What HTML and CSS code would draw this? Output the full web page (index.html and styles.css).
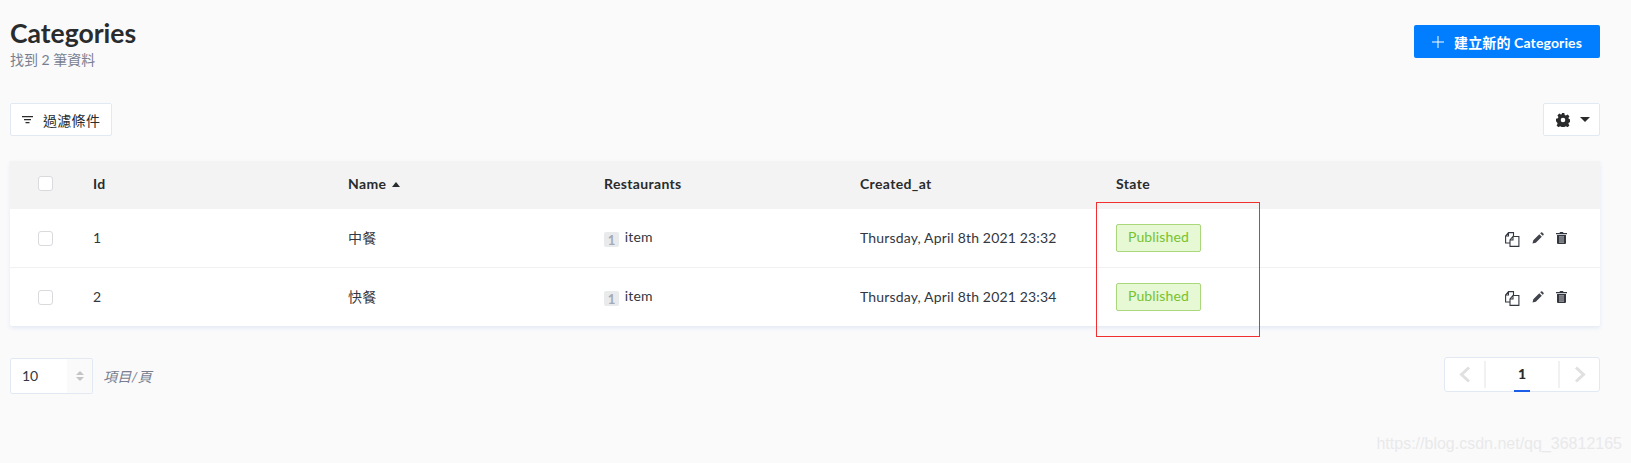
FILE: index.html
```html
<!DOCTYPE html>
<html lang="zh-Hant">
<head>
  <meta charset="UTF-8" />
  <title>Categories</title>
  <link rel="stylesheet" href="styles.css">
</head>
<body>
  <div id="page">
    <div class="head">
      <div>
        <h1>Categories</h1>
        <p class="count">找到 2 筆資料</p>
      </div>
      <button class="btn-add">
        <svg width="12" height="12" viewBox="0 0 12 12"><path d="M6 0v12M0 6h12" stroke="#fff" stroke-width="1" fill="none"/></svg>
        <span>建立新的 Categories</span>
      </button>
    </div>

    <div class="tools">
      <button class="btn-filter">
        <svg width="11" height="8" viewBox="0 0 11 8"><path d="M0 .6h11M2 3.600h7M3.500 6.600h4" stroke="#292b2c" stroke-width="1.200" fill="none"/></svg>
        <span>過濾條件</span>
      </button>
      <button class="btn-gear">
        <svg width="14" height="14" viewBox="0 0 14 14"><path fill-rule="evenodd" fill="#292b2c" d="M5.700 0h2.600l.4 1.900 1.200.5 1.700-1 1.800 1.800-1 1.700.5 1.200 1.900.4v2.600l-1.900.4-.5 1.200 1 1.700-1.800 1.800-1.700-1-1.200.5-.4 1.900H5.700l-.4-1.900-1.200-.5-1.700 1-1.800-1.800 1-1.700-.5-1.200L0 8.300V5.700l1.900-.4.5-1.200-1-1.700 1.800-1.800 1.700 1 1.200-.5zM7 4.700a2.300 2.300 0 1 0 0 4.600 2.300 2.300 0 0 0 0-4.600z"/></svg>
        <i class="caret"></i>
      </button>
    </div>

    <div class="list">
      <div class="row row-head">
        <div class="cell-check"><span class="check"></span></div>
        <div class="cell cell-id">Id</div>
        <div class="cell">Name <i class="sort"></i></div>
        <div class="cell">Restaurants</div>
        <div class="cell">Created_at</div>
        <div class="cell">State</div>
      </div>
      <div class="row">
        <div class="cell-check"><span class="check"></span></div>
        <div class="cell cell-id">1</div>
        <div class="cell">中餐</div>
        <div class="cell"><span class="num">1</span> item</div>
        <div class="cell">Thursday, April 8th 2021 23:32</div>
        <div class="cell cell-state"><span class="tag">Published</span></div>
        <div class="actions">
          <svg width="15" height="15" viewBox="0 0 15 15"><path d="M3.500 .6H8.500V11H.6V4L3.500 .6V4H.6" stroke="#333740" stroke-width="1.100" fill="#fff"/><path d="M8 4.500H13.900V14.400H5V8L8 4.500V8H5" stroke="#333740" stroke-width="1.100" fill="#fff"/></svg>
          <svg width="12" height="12" viewBox="0 0 12 12"><path d="M.5 11.500l.8-3.300 6-6 2.500 2.500-6 6zM8.200 1.300l.8-.8a1 1 0 0 1 1.300 0l1.200 1.200a1 1 0 0 1 0 1.300l-.8.800z" fill="#41444c"/></svg>
          <svg width="11" height="12" viewBox="0 0 11 12"><path fill-rule="evenodd" d="M4 0h3l.5 1H11v1.200H0V1h3.500zM1 3h9v8a1 1 0 0 1-1 1H2a1 1 0 0 1-1-1zm2 1.500v6h5v-6z" fill="#333740"/><rect x="3" y="4.500" width="5" height="6" fill="#77797f"/></svg>
        </div>
      </div>
      <div class="row">
        <div class="cell-check"><span class="check"></span></div>
        <div class="cell cell-id">2</div>
        <div class="cell">快餐</div>
        <div class="cell"><span class="num">1</span> item</div>
        <div class="cell">Thursday, April 8th 2021 23:34</div>
        <div class="cell cell-state"><span class="tag">Published</span></div>
        <div class="actions">
          <svg width="15" height="15" viewBox="0 0 15 15"><path d="M3.500 .6H8.500V11H.6V4L3.500 .6V4H.6" stroke="#333740" stroke-width="1.100" fill="#fff"/><path d="M8 4.500H13.900V14.400H5V8L8 4.500V8H5" stroke="#333740" stroke-width="1.100" fill="#fff"/></svg>
          <svg width="12" height="12" viewBox="0 0 12 12"><path d="M.5 11.500l.8-3.300 6-6 2.500 2.500-6 6zM8.200 1.300l.8-.8a1 1 0 0 1 1.300 0l1.200 1.200a1 1 0 0 1 0 1.300l-.8.800z" fill="#41444c"/></svg>
          <svg width="11" height="12" viewBox="0 0 11 12"><path fill-rule="evenodd" d="M4 0h3l.5 1H11v1.200H0V1h3.500zM1 3h9v8a1 1 0 0 1-1 1H2a1 1 0 0 1-1-1zm2 1.500v6h5v-6z" fill="#333740"/><rect x="3" y="4.500" width="5" height="6" fill="#77797f"/></svg>
        </div>
      </div>
    </div>

    <div class="foot">
      <div class="per-page">
        <div class="select">
          <span class="select-val">10</span>
          <span class="select-arrows"><i class="up"></i><i class="down"></i></span>
        </div>
        <em>項目/頁</em>
      </div>
      <div class="pager">
        <span class="pager-arrow"><svg width="12" height="17" viewBox="0 0 12 17"><path d="M10 1.500L2.500 8.500l7.500 7" stroke="#e0e0e0" stroke-width="3" fill="none"/></svg></span>
        <span class="pager-num">1</span>
        <span class="pager-arrow"><svg width="12" height="17" viewBox="0 0 12 17"><path d="M2 1.500l7.500 7-7.500 7" stroke="#e0e0e0" stroke-width="3" fill="none"/></svg></span>
      </div>
    </div>
  </div>

  <div class="red-box"></div>
  <div class="watermark">https://blog.csdn.net/qq_36812165</div>
</body>
</html>
```

FILE: styles.css
```css
body {
  margin: 0;
  height: 463px;
  background: #fafafb;
  font-family: Lato, "Noto Sans CJK TC", sans-serif;
  font-size: 14px;
  color: #333740;
  overflow: hidden;
  position: relative;
}
#page {
  padding: 18px 31px 0 10px;
}
button {
  font-family: inherit;
  cursor: pointer;
}
.head {
  display: flex;
  justify-content: space-between;
  align-items: flex-start;
  height: 85px;
}
h1 {
  margin: 0;
  font-size: 26.5px;
  line-height: 30px;
  font-weight: 700;
  color: #292b2c;
}
.count {
  margin: 4px 0 0;
  font-size: 14px;
  line-height: 16px;
  color: #787e8f;
}
.btn-add {
  display: flex;
  align-items: center;
  gap: 10px;
  height: 33px;
  margin-top: 7px;
  padding: 0 18px;
  background: #007eff;
  border: 0;
  border-radius: 2px;
  color: #fff;
  font-size: 14px;
  font-weight: 700;
  letter-spacing: .13px;
}
.tools {
  display: flex;
  justify-content: space-between;
  height: 58px;
}
.btn-filter, .btn-gear {
  display: flex;
  align-items: center;
  height: 33px;
  background: #fff;
  border: 1px solid #e3e9f3;
  border-radius: 2px;
  color: #292b2c;
}
.btn-filter {
  gap: 10px;
  width: 102px;
  padding: 0 0 0 11px;
  font-size: 14px;
  letter-spacing: .3px;
}
.btn-gear {
  gap: 10px;
  width: 57px;
  padding: 0 0 0 12px;
}
.caret {
  border-top: 5px solid #292b2c;
  border-left: 5px solid transparent;
  border-right: 5px solid transparent;
}
.list {
  background: #fff;
  border-radius: 2px;
  box-shadow: 0 2px 4px #e3e9f3;
}
.row {
  display: flex;
  align-items: center;
  height: 58px;
  border-top: 1px solid #f1f1f2;
  position: relative;
  letter-spacing: .16px;
}
.row-head + .row {
  border-top: 0;
}
.row-head {
  height: 48px;
  border-top: 0;
  background: #f3f3f4;
  font-weight: 700;
  color: #292b2c;
  letter-spacing: .35px;
}
.cell-check {
  width: 83px;
  padding-left: 28px;
  box-sizing: border-box;
}
.check {
  display: block;
  width: 13px;
  height: 13px;
  background: #fff;
  border: 1px solid #d9dade;
  border-radius: 3px;
}
.row-head .check {
  margin-bottom: 3px;
}
.cell {
  width: 256px;
  padding-bottom: 2px;
}
.row-head .cell {
  padding-bottom: 3px;
}
.cell-id {
  width: 255px;
}
.cell-state {
  padding-bottom: 0;
}
.sort {
  display: inline-block;
  margin: 0 0 2px 2px;
  border-bottom: 5px solid #292b2c;
  border-left: 4px solid transparent;
  border-right: 4px solid transparent;
}
.num {
  display: inline-block;
  width: 15px;
  height: 15px;
  margin-right: 2px;
  background: #e9eaeb;
  border-radius: 2px;
  color: #a3a9b8;
  font-size: 13px;
  font-weight: 700;
  line-height: 16px;
  text-align: center;
  vertical-align: -3px;
}
.tag {
  display: inline-block;
  box-sizing: border-box;
  width: 85px;
  height: 28px;
  background: #e6f8d4;
  border: 1px solid #aad67c;
  border-radius: 2px;
  color: #78c22f;
  line-height: 24px;
  text-align: center;
}
.actions {
  position: absolute;
  right: 33px;
  top: 23px;
  display: flex;
  align-items: flex-start;
  gap: 12px;
}
.foot {
  display: flex;
  justify-content: space-between;
  margin-top: 32px;
}
.per-page {
  display: flex;
  align-items: center;
  gap: 10px;
  height: 36px;
}
.per-page em {
  color: #787e8f;
  font-size: 14px;
  letter-spacing: .3px;
}
.select {
  display: flex;
  width: 83px;
  height: 36px;
  box-sizing: border-box;
  background: #fff;
  border: 1px solid #e3e9f3;
  border-radius: 2px;
}
.select-val {
  flex: 1;
  padding-left: 11px;
  line-height: 34px;
}
.select-arrows {
  display: flex;
  flex-direction: column;
  align-items: center;
  justify-content: center;
  gap: 2px;
  width: 25px;
  background: #fafafb;
}
.up, .down {
  border-left: 4px solid transparent;
  border-right: 4px solid transparent;
}
.up { border-bottom: 4px solid #c4c4c8; }
.down { border-top: 4px solid #c4c4c8; }
.pager {
  display: flex;
  align-items: center;
  width: 156px;
  height: 35px;
  margin-top: -1px;
  box-sizing: border-box;
  background: #fff;
  border: 1px solid #e3e9f3;
  border-radius: 3px;
}
.pager-arrow {
  display: flex;
  align-items: center;
  justify-content: center;
  width: 39px;
  height: 28px;
}
.pager-num {
  flex: 1;
  align-self: stretch;
  margin: 3px 0 0;
  border-left: 2px solid #f1f1f2;
  border-right: 2px solid #f1f1f2;
  height: 27px;
  font-weight: 900;
  line-height: 25px;
  text-align: center;
  color: #292b2c;
  position: relative;
}
.pager-num::after {
  content: "";
  position: absolute;
  left: 28px;
  bottom: -4px;
  width: 16px;
  height: 2px;
  background: #1c5de7;
}
.red-box {
  position: absolute;
  left: 1096px;
  top: 202px;
  width: 162px;
  height: 133px;
  border: 1px solid #f22f2f;
}
.watermark {
  position: absolute;
  right: 9px;
  top: 435px;
  font-family: "Liberation Sans", sans-serif;
  font-size: 16px;
  color: #e9e9ea;
}
```
